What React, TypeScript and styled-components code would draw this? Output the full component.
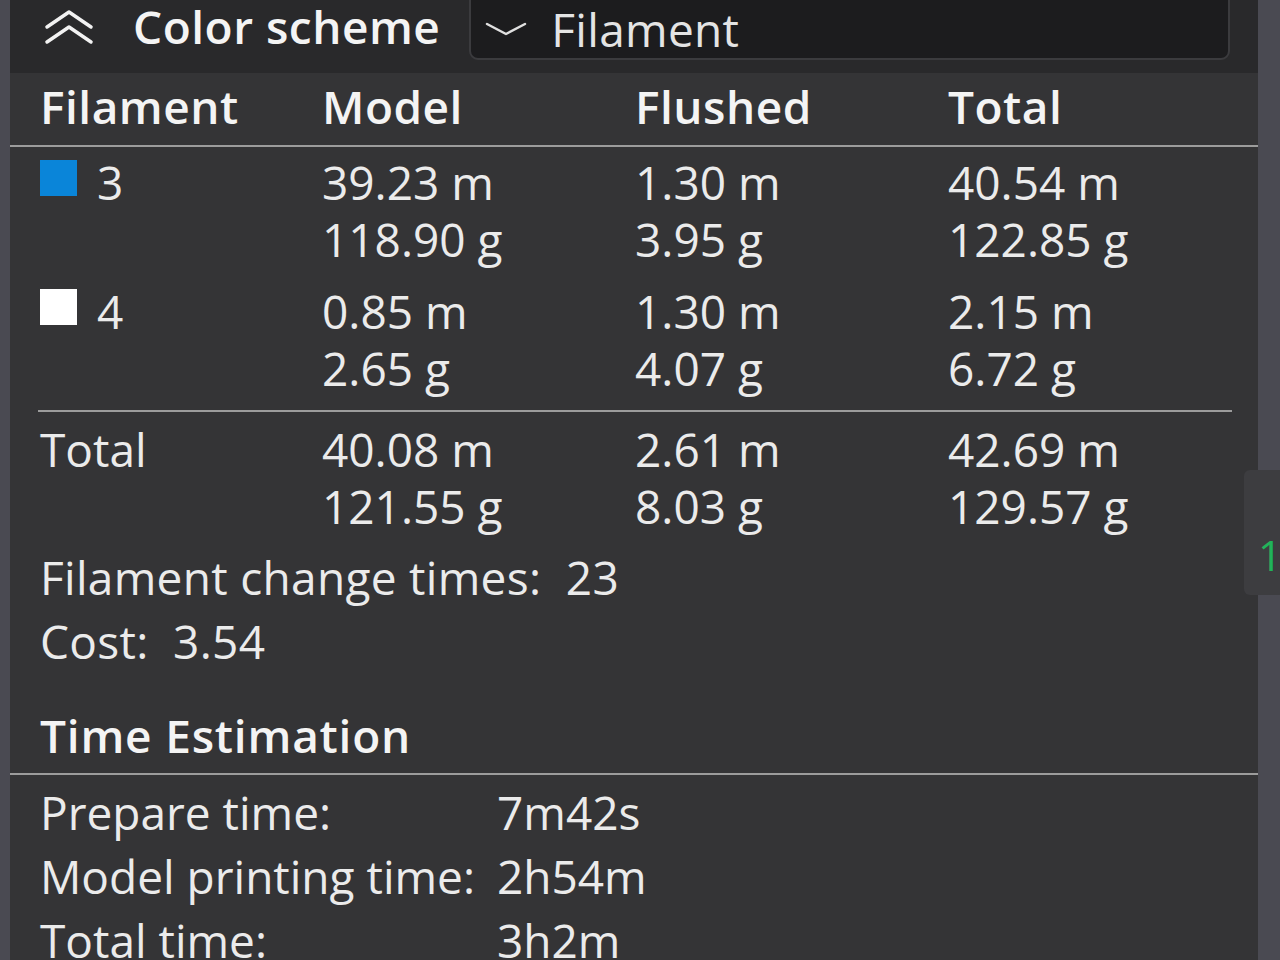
import React from 'react';
import styled, { createGlobalStyle } from 'styled-components';

const GlobalStyle = createGlobalStyle`
  html, body {
    margin: 0;
    padding: 0;
    background: #343436;
    overflow: hidden;
  }
  body {
    font-family: 'Open Sans', 'Noto Sans', sans-serif;
    color: #ebebeb;
  }
`;

const Page = styled.div`
  display: flex;
  flex-direction: row;
  width: 1280px;
  height: 960px;
  overflow: hidden;
  position: relative;
`;

const SideStrip = styled.div<{ $w: number }>`
  width: ${(p) => p.$w}px;
  flex-shrink: 0;
  background: #4a4a52;
`;

const Panel = styled.div`
  flex: 1;
  background: #343436;
  min-width: 0;
`;

const Header = styled.div`
  height: 73px;
  display: flex;
  flex-direction: row;
  align-items: center;
  background: #29292b;
  padding-left: 34px;
`;

const Title = styled.div`
  font-size: 46px;
  font-weight: 600;
  color: #f4f4f4;
  margin-left: 39px;
  margin-top: -22px;
  letter-spacing: 0.5px;
`;

const Dropdown = styled.div`
  margin-left: 29px;
  width: 761px;
  height: 70px;
  margin-top: -24px;
  box-sizing: border-box;
  background: #1c1c1e;
  border: 2px solid #3b3b3e;
  border-radius: 9px;
  display: flex;
  align-items: center;
  padding: 8px 0 0 14px;
  font-size: 46px;
  color: #e4e4e4;
  gap: 24px;
  letter-spacing: 0.3px;
`;

const Grid = styled.div`
  display: grid;
  grid-template-columns: 282px 313px 313px 1fr;
  padding-left: 30px;
`;

const HeadRow = styled(Grid)`
  height: 74px;
  box-sizing: border-box;
  padding-bottom: 6px;
  align-items: center;
  border-bottom: 2px solid #9c9c9c;
  font-size: 46px;
  font-weight: 600;
  color: #f4f4f4;
  letter-spacing: 0.5px;
`;

const DataRow = styled(Grid)<{ $top: number; $bottom: number }>`
  padding-top: ${(p) => p.$top}px;
  padding-bottom: ${(p) => p.$bottom}px;
  font-size: 46px;
  line-height: 57px;
`;

const Cell = styled.div`
  display: flex;
  flex-direction: column;
`;

const FilamentCell = styled.div`
  display: flex;
  align-items: center;
  height: 57px;
  gap: 20px;
`;

const Swatch = styled.span<{ $color: string }>`
  width: 37px;
  height: 36px;
  background: ${(p) => p.$color};
  display: inline-block;
  margin-top: -10px;
`;

const Divider = styled.div<{ $inset: boolean }>`
  height: 2px;
  background: #9c9c9c;
  margin: ${(p) => (p.$inset ? '0 26px 0 28px' : '0')};
`;

const InfoBlock = styled.div`
  padding: 10px 0 0 30px;
  font-size: 46px;
  line-height: 64px;
  letter-spacing: 0.3px;
`;

const Section = styled.div`
  margin-top: 30px;
  padding-left: 30px;
  font-size: 46px;
  font-weight: 600;
  line-height: 64px;
  color: #f4f4f4;
  padding-bottom: 6px;
  letter-spacing: 0.8px;
`;

const TimeGrid = styled.div`
  display: grid;
  grid-template-columns: 457px 1fr;
  padding: 5px 0 0 30px;
  font-size: 46px;
  line-height: 64px;
  white-space: nowrap;
`;

const SideTab = styled.div`
  position: absolute;
  right: 0;
  top: 470px;
  width: 36px;
  height: 125px;
  background: #3d3d40;
  border-radius: 6px 0 0 6px;
  color: #21b35a;
  font-size: 42px;
  display: flex;
  align-items: center;
  padding-left: 14px;
  padding-top: 44px;
  box-sizing: border-box;
  overflow: hidden;
`;

const rows = [
  { id: '3', color: '#0a85d9', model: ['39.23 m', '118.90 g'], flushed: ['1.30 m', '3.95 g'], total: ['40.54 m', '122.85 g'] },
  { id: '4', color: '#ffffff', model: ['0.85 m', '2.65 g'], flushed: ['1.30 m', '4.07 g'], total: ['2.15 m', '6.72 g'] },
];

const times = [
  ['Prepare time:', '7m42s'],
  ['Model printing time:', '2h54m'],
  ['Total time:', '3h2m'],
];

function DoubleChevron() {
  return (
    <svg width="50" height="36" viewBox="0 0 50 36" fill="none" stroke="#f2f2f2" strokeWidth="3.5" strokeLinecap="round" strokeLinejoin="round" style={{ marginTop: -20 }}>
      <polyline points="3,18 25,3 47,18" />
      <polyline points="3,33 25,18 47,33" />
    </svg>
  );
}

function ChevronDown() {
  return (
    <svg width="42" height="16" viewBox="0 0 42 16" fill="none" stroke="#e0e0e0" strokeWidth="2.5" strokeLinecap="round" strokeLinejoin="round">
      <polyline points="2,3 21,13 40,3" />
    </svg>
  );
}

function Values({ lines }: { lines: string[] }) {
  return (
    <Cell>
      {lines.map((l) => (
        <span key={l}>{l}</span>
      ))}
    </Cell>
  );
}

export default function App() {
  return (
    <Page>
      <GlobalStyle />
      <SideStrip $w={10} />
      <Panel>
        <Header>
          <DoubleChevron />
          <Title>Color scheme</Title>
          <Dropdown>
            <ChevronDown />
            <span>Filament</span>
          </Dropdown>
        </Header>
        <HeadRow>
          <div>Filament</div>
          <div>Model</div>
          <div>Flushed</div>
          <div>Total</div>
        </HeadRow>
        {rows.map((r, i) => (
          <DataRow key={r.id} $top={i === 0 ? 7 : 15} $bottom={i === 0 ? 0 : 13}>
            <FilamentCell>
              <Swatch $color={r.color} />
              <span>{r.id}</span>
            </FilamentCell>
            <Values lines={r.model} />
            <Values lines={r.flushed} />
            <Values lines={r.total} />
          </DataRow>
        ))}
        <Divider $inset />
        <DataRow $top={9} $bottom={0}>
          <div>Total</div>
          <Values lines={['40.08 m', '121.55 g']} />
          <Values lines={['2.61 m', '8.03 g']} />
          <Values lines={['42.69 m', '129.57 g']} />
        </DataRow>
        <InfoBlock>
          <div>Filament change times:&nbsp; 23</div>
          <div>Cost:&nbsp; 3.54</div>
        </InfoBlock>
        <Section>Time Estimation</Section>
        <Divider $inset={false} />
        <TimeGrid>
          {times.map(([k, v]) => (
            <React.Fragment key={k}>
              <span>{k}</span>
              <span>{v}</span>
            </React.Fragment>
          ))}
        </TimeGrid>
      </Panel>
      <SideStrip $w={22} />
      <SideTab>1</SideTab>
    </Page>
  );
}
